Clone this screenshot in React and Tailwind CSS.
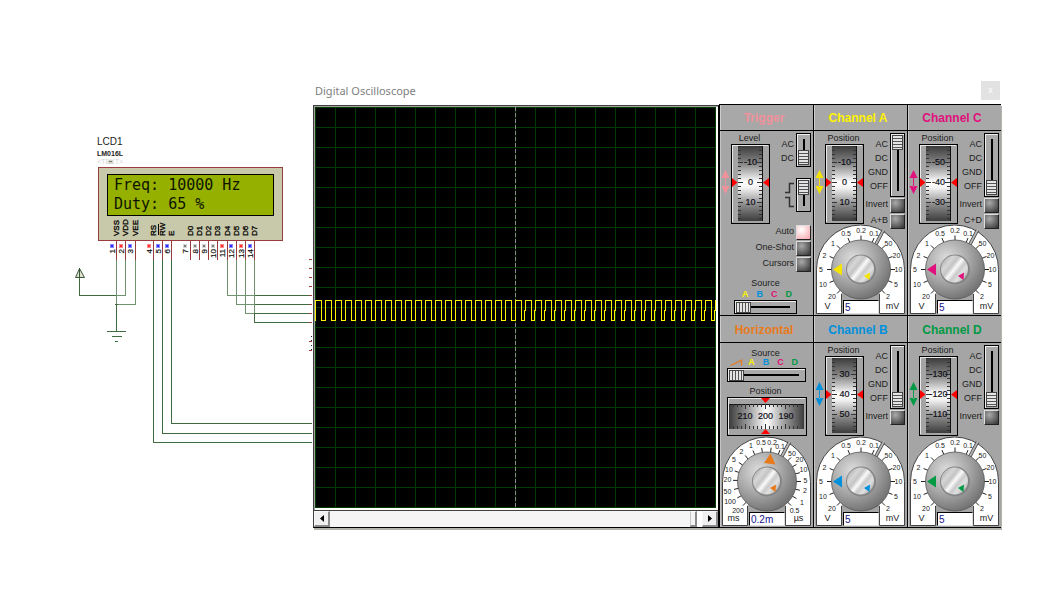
import React from "react";

const WIRE = "#3f6b3f";
const WIRE_SOFT = "#6f936f";
const PIN = "#9a3b40";

const PINS = [
  { n: "1", name: "VSS", x: 116, nx: 111, state: "low" },
  { n: "2", name: "VDD", x: 125, nx: 120, state: "high" },
  { n: "3", name: "VEE", x: 135, nx: 129, state: "low" },
  { n: "4", name: "RS", x: 153, nx: 148, state: "high" },
  { n: "5", name: "RW", x: 162, nx: 157, state: "low" },
  { n: "6", name: "E", x: 171, nx: 166, state: "low" },
  { n: "7", name: "D0", x: 190, nx: 184, state: "open" },
  { n: "8", name: "D1", x: 199, nx: 194, state: "open" },
  { n: "9", name: "D2", x: 208, nx: 203, state: "open" },
  { n: "10", name: "D3", x: 217, nx: 212, state: "open" },
  { n: "11", name: "D4", x: 227, nx: 221, state: "high" },
  { n: "12", name: "D5", x: 236, nx: 230, state: "low" },
  { n: "13", name: "D6", x: 245, nx: 240, state: "high" },
  { n: "14", name: "D7", x: 254, nx: 249, state: "low" },
];

const STATE_COLORS = {
  low: ["#8a8aff", "#2a2aff"],
  high: ["#ff8a8a", "#ff3030"],
  open: ["#d4d4d4", "#7c7c7c"],
};

function Schematic() {
  return (
    <svg
      className="h-[560px] w-[313px] shrink-0"
      viewBox="0 0 313 560"
      role="img"
      aria-label="LCD schematic"
      fontFamily="'Liberation Sans', Arial, sans-serif"
    >
      <text x="97" y="145" fontSize="10" fill="#222">LCD1</text>
      <text x="97" y="156" fontSize="7" fontWeight="700" fill="#222">LM016L</text>
      <text x="97" y="164" fontSize="7" fill="#d4d4d4">&lt;TEXT&gt;</text>
      <rect x="108" y="160" width="5" height="4" fill="#d8dac8" />
      <rect x="109" y="161" width="3" height="1" fill="#777" />

      <g shapeRendering="crispEdges">
        <rect x="98.5" y="167.5" width="184" height="73" fill="#c8c8aa" stroke={PIN} />
        <rect x="107.5" y="174.5" width="166" height="41" fill="#96b000" stroke="#000" />
      </g>
      <g fontFamily="'DejaVu Sans Mono', 'Liberation Mono', monospace" fontSize="15" fill="#0c1400">
        <text x="114" y="190">Freq: 10000 Hz</text>
        <text x="114" y="209">Duty: 65 %</text>
      </g>

      <g shapeRendering="crispEdges" fill="none" stroke={WIRE}>
        <path d="M79.5 268V295.5H116M116.5 304V331" />
        <path d="M115 304.5H118M107 331.5H126M112 336.5H122M115 341.5H118" />
        <path d="M153.5 260V442.5H312M162.5 260V433.5H312M171.5 260V423.5H312" />
        <path d="M254 295.5H312M254 304.5H312M254 313.5H312M254.5 313V322.5H312" />
      </g>
      <g shapeRendering="crispEdges" fill="none" stroke={WIRE_SOFT}>
        <path d="M116.5 260V304M125.5 260V295.5H116M135.5 260V304.5H118" />
        <path d="M227.5 260V295.5H254M236.5 260V304.5H254M245.5 260V313.5H254M254.5 260V313" />
      </g>
      <path d="M79.500 268.500L75.500 277.500H84.500ZM79.500 268V278" fill="#e4e0d0" stroke="#38563a" />

      <g shapeRendering="crispEdges" stroke={PIN}>
        {[259, 268, 277, 286, 295, 304, 313, 322, 341, 350].map((y) => (
          <path key={y} d={`M309 ${y + 0.5}H312`} />
        ))}
      </g>
      {[336, 340, 345, 349].map((y) => (
        <rect key={y} x="311" y={y} width="1" height="1" fill="#222" />
      ))}

      {PINS.map((p) => (
        <g key={p.n}>
          <path d={`M${p.x + 0.5} 241V260`} stroke={PIN} shapeRendering="crispEdges" />
          <rect x={p.nx - 1} y="244" width="4" height="4" fill={STATE_COLORS[p.state][0]} />
          <rect x={p.nx} y="245" width="2" height="2" fill={STATE_COLORS[p.state][1]} />
          <text transform={`translate(${p.x + 3} 236) rotate(-90)`} fontSize="8" fill="#000" stroke="#000" strokeWidth="0.3">
            {p.name}
          </text>
          <text transform={`translate(${p.nx + 4} 249) rotate(-90)`} textAnchor="end" fontSize="8" fill="#111" stroke="#111" strokeWidth="0.2">
            {p.n}
          </text>
        </g>
      ))}
      <path d="M158.500 224V235" stroke="#000" />
    </svg>
  );
}

const TRACE = (() => {
  let d = "M0.5 213.5V193.5";
  for (let i = 0; i < 200; i++) {
    const x = i * 10;
    d += `H${x + 6.5}V213.5`;
    d += i < 20 ? `H${x + 10.5}V193.5` : `H${x + 9.5}V203.5H${x + 10.5}V193.5`;
  }
  return d;
})();

function Screen() {
  return (
    <svg className="block h-[401px] w-full bg-black" role="img" aria-label="Trace display" shapeRendering="crispEdges">
      <defs>
        <pattern id="graticule" width="20" height="20" patternUnits="userSpaceOnUse">
          <path d="M0 0.5H20M0.5 0V20" stroke="#003c00" fill="none" />
        </pattern>
      </defs>
      <rect width="100%" height="401" fill="url(#graticule)" />
      <line x1="50%" x2="50%" y1="0" y2="401" stroke="#8c8c8c" strokeDasharray="4 2" />
      <path d={TRACE} fill="none" stroke="#fff200" />
    </svg>
  );
}

const SCROLL_BUTTON =
  "flex w-4 shrink-0 items-center justify-center border border-r-2 border-b-2 border-[#f8f8f8] border-r-[#8a8a8a] border-b-[#8a8a8a] bg-[#f0f0f0]";

function ScrollBar() {
  return (
    <div className="flex h-4 bg-white">
      <button type="button" aria-label="Scroll left" className={SCROLL_BUTTON}>
        <svg className="h-[7px] w-[4px]" viewBox="0 0 4 7"><path d="M4 0V7L0 3.500Z" /></svg>
      </button>
      <input
        type="range"
        aria-label="Time base scroll"
        defaultValue="100"
        className="h-4 min-w-0 flex-1 appearance-none bg-[#f5f5f5] [&::-webkit-slider-thumb]:h-4 [&::-webkit-slider-thumb]:w-[7px] [&::-webkit-slider-thumb]:appearance-none [&::-webkit-slider-thumb]:border [&::-webkit-slider-thumb]:border-r-2 [&::-webkit-slider-thumb]:border-b-2 [&::-webkit-slider-thumb]:border-t-[#fff] [&::-webkit-slider-thumb]:border-l-[#c8c8c8] [&::-webkit-slider-thumb]:border-r-[#8a8a8a] [&::-webkit-slider-thumb]:border-b-[#8a8a8a] [&::-webkit-slider-thumb]:bg-[#f4f4f4]"
      />
      <span className="w-[5px] shrink-0" />
      <button type="button" aria-label="Scroll right" className={SCROLL_BUTTON}>
        <svg className="h-[7px] w-[4px]" viewBox="0 0 4 7"><path d="M0 0V7L4 3.500Z" /></svg>
      </button>
    </div>
  );
}

const BEVEL = "border border-black shadow-[inset_1px_1px_0_#eee] bg-[#a9a9a9]";

function VSlider({ label, max, value, tall }) {
  return (
    <div className={`flex w-[15px] shrink-0 justify-center py-px ${BEVEL} ${tall ? "h-16" : "h-[34px]"}`}>
      <input
        type="range"
        aria-label={label}
        min="0"
        max={max}
        defaultValue={value}
        className="m-0 h-full w-[11px] appearance-none bg-[linear-gradient(#000,#000)] bg-[length:2px_calc(100%-8px)] bg-center bg-no-repeat [writing-mode:vertical-lr] [&::-webkit-slider-thumb]:h-[15px] [&::-webkit-slider-thumb]:w-[11px] [&::-webkit-slider-thumb]:appearance-none [&::-webkit-slider-thumb]:border [&::-webkit-slider-thumb]:border-[#444] [&::-webkit-slider-thumb]:bg-[repeating-linear-gradient(#e4e4e4_0_2px,#555_2px_3px)]"
      />
    </div>
  );
}

function HSlider({ label, max, className }) {
  return (
    <div className={`flex h-[14px] items-center px-px ${BEVEL} ${className}`}>
      <input
        type="range"
        aria-label={label}
        min="0"
        max={max}
        defaultValue="0"
        className="m-0 h-[11px] w-full appearance-none bg-[linear-gradient(#000,#000)] bg-[length:calc(100%-10px)_2px] bg-center bg-no-repeat [&::-webkit-slider-thumb]:h-[11px] [&::-webkit-slider-thumb]:w-[15px] [&::-webkit-slider-thumb]:appearance-none [&::-webkit-slider-thumb]:border [&::-webkit-slider-thumb]:border-[#444] [&::-webkit-slider-thumb]:bg-[repeating-linear-gradient(90deg,#e4e4e4_0_2px,#555_2px_3px)]"
      />
    </div>
  );
}

function PushButton({ label, on }) {
  return (
    <label className="flex h-4 shrink-0 items-center justify-end gap-[2px] pr-[2px] whitespace-nowrap">
      {label}
      <input
        type="checkbox"
        defaultChecked={on}
        className="m-0 h-[15px] w-[15px] shrink-0 appearance-none border border-t-[#ddd] border-l-[#ddd] border-r-[#222] border-b-[#222] bg-[radial-gradient(circle_at_35%_30%,#aaa,#3c3c3c_90%)] checked:bg-[radial-gradient(circle_at_35%_30%,#fff,#f7a8ae_95%)]"
      />
    </label>
  );
}

const TICKS = [2, 6, 10, 14, 18, 22, 26, 30, 34, 38, 42, 46, 50, 54, 58, 62, 66, 70, 74];

function VWheel({ values }) {
  return (
    <svg className="h-20 w-[39px]" viewBox="0 0 39 80" fontFamily="'Liberation Sans', Arial, sans-serif" fontSize="9">
      <defs>
        <linearGradient id="drumV" x1="0" x2="0" y1="0" y2="1">
          <stop offset="0" stopColor="#3c3c3c" />
          <stop offset="0.25" stopColor="#8c8c8c" />
          <stop offset="0.48" stopColor="#fff" />
          <stop offset="0.56" stopColor="#f2f2f2" />
          <stop offset="0.78" stopColor="#8c8c8c" />
          <stop offset="1" stopColor="#3c3c3c" />
        </linearGradient>
      </defs>
      <g shapeRendering="crispEdges">
        <rect x="0.5" y="0.5" width="38" height="79" fill="#a4a4a4" stroke="#000" />
        <path d="M1.500 78V1.500H37" fill="none" stroke="#e8e8e8" />
        <rect x="7" y="2" width="25" height="75" fill="url(#drumV)" />
        <path d="M31.500 2V77" stroke="#111" />
        {TICKS.map((y) => {
          const len = y % 20 === 18 ? 5 : 3;
          return <path key={y} d={`M7 ${y + 0.5}h${len}M31 ${y + 0.5}h-${len}`} stroke="#333" />;
        })}
      </g>
      {values.map((v, i) => (
        <text key={v} x="19.500" y={21 + i * 20} textAnchor="middle" fill="#101018" stroke="#101018" strokeWidth="0.2">{v}</text>
      ))}
      <path d="M1 34V43L6.500 38.500ZM38 34V43L32 38.500Z" fill="#f00" />
    </svg>
  );
}

function HWheel({ values }) {
  const ticks = Array.from({ length: 18 }, (_, i) => 4 + i * 4);
  return (
    <svg className="ml-[7px] h-[39px] w-20" viewBox="0 0 80 39" fontFamily="'Liberation Sans', Arial, sans-serif" fontSize="9">
      <defs>
        <linearGradient id="drumH">
          <stop offset="0" stopColor="#3c3c3c" />
          <stop offset="0.25" stopColor="#999" />
          <stop offset="0.5" stopColor="#fff" />
          <stop offset="0.75" stopColor="#999" />
          <stop offset="1" stopColor="#3c3c3c" />
        </linearGradient>
      </defs>
      <g shapeRendering="crispEdges">
        <rect x="0.5" y="0.5" width="79" height="38" fill="#a4a4a4" stroke="#000" />
        <path d="M1.500 37V1.500H78" fill="none" stroke="#e8e8e8" />
        <rect x="2" y="7" width="75" height="25" fill="url(#drumH)" />
        <path d="M2 7.500H77" stroke="#111" />
        {ticks.map((x) => {
          const len = x % 20 === 0 ? 5 : 3;
          return <path key={x} d={`M${x - 1.5} 7v${len}M${x - 1.5} 32v-${len}`} stroke="#333" />;
        })}
      </g>
      {values.map((v, i) => (
        <text key={v} x={18 + i * 20.5} y="22" textAnchor="middle" fill="#101018" stroke="#101018" strokeWidth="0.2">{v}</text>
      ))}
      <path d="M34 1H43L38.500 6ZM34 37H43L38.500 32Z" fill="#f00" />
    </svg>
  );
}

function MoveArrow({ color }) {
  return (
    <div className="w-[11px] shrink-0 pt-[39px] pl-px">
      <svg className="h-6 w-[9px]" viewBox="0 0 9 24">
        <path d="M4.500 0L8.500 8H0.500ZM4.500 24L8.500 16H0.500ZM4 7H5V17H4Z" fill={color} />
      </svg>
    </div>
  );
}

const VOLT_SCALE = [
  ["20", 225, 17, 72], ["10", 202.5, 8, 60], ["5", 180, 6, 45], ["2", 157.5, 9.5, 31],
  ["1", 135, 18, 19], ["0.5", 112.5, 31, 9.5], ["0.2", 90, 46, 6.5], ["0.1", 67.5, 59, 9.5],
  ["50", 45, 73.5, 19], ["20", 22.5, 81.5, 31], ["10", 0, 83.5, 45], ["5", -22.5, 81, 60], ["2", -45, 73, 72],
];

const TIME_SCALE = [
  ["200", 225, 17, 74.5], ["100", 209, 9, 65.5], ["50", 193.5, 6.5, 55.5], ["20", 178, 6.5, 43.5],
  ["10", 162, 8, 33.5], ["5", 146, 13, 23], ["2", 130, 20.5, 15.5], ["1", 114.5, 30, 9.5],
  ["0.5", 99, 40, 6], ["0.2", 83, 51, 6], ["0.1", 67.5, 59, 10.5], ["50", 45, 71, 17.5],
  ["20", 30, 78.5, 23.5], ["10", 15, 82.5, 33.5], ["5", 0, 84.5, 44.5], ["2", -15, 84, 54.5],
  ["1", -30, 81, 66], ["0.5", -45, 73.5, 74.5],
];

function Dial({ scale, color, pointer, units, value, label }) {
  return (
    <div className="ml-px grid h-[90px] w-[91px]">
      <svg
        className="[grid-area:1/1] h-[90px] w-[91px]"
        viewBox="0 0 91 90"
        fontFamily="'Liberation Sans', Arial, sans-serif"
        fontSize="7"
        fill="#222"
        textAnchor="middle"
      >
        <defs>
          <radialGradient id="knobOuter" cx="0.36" cy="0.32" r="0.75">
            <stop offset="0" stopColor="#dedede" />
            <stop offset="0.5" stopColor="#a8a8a8" />
            <stop offset="1" stopColor="#6c6c6c" />
          </radialGradient>
          <linearGradient id="knobInner" x1="0" y1="0.1" x2="1" y2="0.9">
            <stop offset="0" stopColor="#a4a4a4" />
            <stop offset="0.25" stopColor="#d6d6d6" />
            <stop offset="0.38" stopColor="#c4c4c4" />
            <stop offset="0.5" stopColor="#fafafa" />
            <stop offset="0.62" stopColor="#cacaca" />
            <stop offset="0.75" stopColor="#e0e0e0" />
            <stop offset="1" stopColor="#a0a0a0" />
          </linearGradient>
        </defs>
        <path d="M1.500 89.500V45.500A44 44.500 0 0 1 89.500 45.500V89.500H64.500V70H26.500V89.500Z" fill="#fff" stroke="#444" />
        <path d="M60 22L68.500 6" stroke="#444" strokeWidth="3.500" />
        <path d="M60 22L69 5" stroke="#b4b4b4" strokeWidth="1.800" />
        <path d="M27 68H64V89H27Z" fill="#a4a4a4" />
        {scale.map(([text, angle, x, y]) => {
          const a = (angle * Math.PI) / 180;
          const c = Math.cos(a);
          const s = -Math.sin(a);
          return (
            <g key={angle}>
              <path d={`M${46 + c * 29} ${45.5 + s * 29}L${46 + c * 34} ${45.5 + s * 34}`} stroke="#222" />
              <text x={x} y={y + 2.5}>{text}</text>
            </g>
          );
        })}
        <circle cx="46" cy="45.500" r="29.500" fill="url(#knobOuter)" stroke="#555" strokeWidth="0.8" />
        <circle cx="46" cy="45.500" r="15" fill="#858585" />
        <circle cx="45.500" cy="45" r="13.500" fill="url(#knobInner)" />
        <path d={pointer} fill={color} />
        <path d="M49 52L55 48.500L54.500 56Z" fill={color} />
        <text x="12.500" y="85" fontSize="9">{units[0]}</text>
        <text x="77.500" y="85" fontSize="9">{units[1]}</text>
      </svg>
      <input
        type="text"
        aria-label={label}
        defaultValue={value}
        className="[grid-area:1/1] ml-7 h-[14px] w-9 self-end border border-r-[#ddd] border-b-[#ddd] border-t-black border-l-black bg-white px-px text-[10px] leading-3 text-[#14148c]"
      />
    </div>
  );
}

const POINT_LEFT = "M18 45.500L27 39.500V51.500Z";
const POINT_UP = "M49.500 17.500L43 27L54.500 28.500Z";

function Panel({ title, className, lower, children }) {
  return (
    <section className="border-b border-l border-black bg-[#a5a5a5]">
      <h2
        className={`flex items-center justify-center border-b border-black bg-[#a8a8a8] pt-px pr-[5px] text-[12px] leading-none font-bold shadow-[inset_1px_0_0_#ccc] ${lower ? "h-[27px]" : "h-[26px]"} ${className}`}
      >
        {title}
      </h2>
      <div className="h-[184px] shadow-[inset_1px_0_0_#c4c4c4]">{children}</div>
    </section>
  );
}

function Channel({ title, className, color, values, coupling, sum, lower }) {
  return (
    <Panel title={title} className={className} lower={lower}>
      <div className="flex h-[93px]">
        <MoveArrow color={color} />
        <div className="flex w-[39px] shrink-0 flex-col items-center">
          <span className="h-[13px] pr-[2px] leading-[14px]">Position</span>
          <VWheel values={values} />
        </div>
        <div className="flex flex-1 flex-col pt-[2px]">
          <div className="flex h-16 shrink-0 justify-end gap-[2px] pr-[2px]">
            <ul className="pt-1 text-right leading-[14px]">
              <li>AC</li>
              <li>DC</li>
              <li>GND</li>
              <li>OFF</li>
            </ul>
            <VSlider label={`${title} coupling`} max="3" value={coupling} tall />
          </div>
          <PushButton label="Invert" />
          {sum && <PushButton label={sum} />}
        </div>
      </div>
      <Dial scale={VOLT_SCALE} color={color} pointer={POINT_LEFT} units={["V", "mV"]} value="5" label={`${title} volts per division`} />
    </Panel>
  );
}

function SourceLetters() {
  return (
    <>
      <span className="text-[#fff200]">A</span>
      <span className="text-[#0090dc]">B</span>
      <span className="text-[#e0107c]">C</span>
      <span className="text-[#009a44]">D</span>
    </>
  );
}

function TriggerPanel() {
  return (
    <Panel title="Trigger" className="text-[#f0919b]">
      <div className="flex h-[93px]">
        <MoveArrow color="#f0919b" />
        <div className="flex w-[39px] shrink-0 flex-col items-center">
          <span className="h-[13px] pr-[2px] leading-[14px]">Level</span>
          <VWheel values={["-10", "0", "10"]} />
        </div>
        <div className="flex flex-1 flex-col gap-[11px] pt-[2px] pr-[2px]">
          <div className="flex justify-end gap-[2px]">
            <ul className="pt-1 text-right leading-[14px]">
              <li>AC</li>
              <li>DC</li>
            </ul>
            <VSlider label="Trigger coupling" max="1" value="1" />
          </div>
          <div className="flex items-center justify-end gap-[2px]">
            <svg className="h-7 w-[9px]" viewBox="0 0 9 28" fill="none" stroke="#333" strokeWidth="1.500">
              <path d="M0 11.500H4.500V2.500H9M0 16.500H4.500V25.500H9" />
            </svg>
            <VSlider label="Trigger edge" max="1" value="0" />
          </div>
        </div>
      </div>
      <PushButton label="Auto" on />
      <PushButton label="One-Shot" />
      <PushButton label="Cursors" />
      <p className="pt-[5px] pr-[2px] text-center leading-3">Source</p>
      <div className="ml-[18px] grid w-[58px] grid-cols-4 text-center leading-[11px] font-bold">
        <SourceLetters />
      </div>
      <HSlider label="Trigger source" max="3" className="ml-[14px] w-[63px]" />
    </Panel>
  );
}

function HorizontalPanel() {
  return (
    <Panel title="Horizontal" className="text-[#e87a1c]" lower>
      <div className="h-[93px]">
        <p className="pt-[5px] pr-[2px] text-center leading-[10px]">Source</p>
        <div className="ml-[10px] grid h-[10px] w-[72px] grid-cols-5 text-center leading-[9px] font-bold">
          <svg className="h-[9px] w-[14px]" viewBox="0 0 14 9" fill="none" stroke="#e87a1c" strokeWidth="1.200">
            <path d="M1 7.500L11.500 2V7.500" />
          </svg>
          <SourceLetters />
        </div>
        <HSlider label="Horizontal source" max="4" className="ml-[7px] w-[79px]" />
        <p className="pt-[3px] pr-[2px] text-center leading-3">Position</p>
        <HWheel values={["210", "200", "190"]} />
      </div>
      <Dial scale={TIME_SCALE} color="#e87a1c" pointer={POINT_UP} units={["ms", "µs"]} value="0.2m" label="Time per division" />
    </Panel>
  );
}

export default function App() {
  return (
    <main className="flex min-h-screen items-start bg-white font-['Liberation_Sans',Arial,sans-serif] text-[9px] text-[#1c1c1c]">
      <Schematic />
      <section className="mt-[76px] mr-[41px] min-w-0 flex-1">
        <header className="flex h-7 items-center justify-between pr-px pl-[2px]">
          <h1 className="pt-[2px] font-['Noto_Sans','Open_Sans',sans-serif] text-[11px] text-[#808080]">Digital Oscilloscope</h1>
          <button type="button" aria-label="Close" className="h-[19px] w-[19px] bg-[#e2e2e2] text-[9px] leading-none text-white">
            x
          </button>
        </header>
        <div className="flex shadow-[1px_2px_0_#b4b4ac]">
          <div className="mt-px flex min-w-0 flex-1 flex-col border border-t-[#404040] border-r-black border-b-black border-l-[#404040] bg-white">
            <div className="flex-1 border-b border-[#404040] pr-[2px] pb-[2px] shadow-[inset_1px_1px_0_#a0a0a0]">
              <div className="pt-px pl-px">
                <Screen />
              </div>
            </div>
            <ScrollBar />
          </div>
          <div className="grid shrink-0 grid-cols-[94px_94px_94px] border-t border-black shadow-[inset_-1px_0_0_#000]">
            <TriggerPanel />
            <Channel title="Channel A" className="text-[#fff200]" color="#f5e400" values={["-10", "0", "10"]} coupling="0" sum="A+B" />
            <Channel title="Channel C" className="text-[#e0107c]" color="#e0107c" values={["-50", "-40", "-30"]} coupling="3" sum="C+D" />
            <HorizontalPanel />
            <Channel title="Channel B" className="text-[#0090dc]" color="#0090dc" values={["30", "40", "50"]} coupling="3" lower />
            <Channel title="Channel D" className="text-[#009a44]" color="#009a44" values={["-130", "-120", "-110"]} coupling="3" lower />
          </div>
        </div>
      </section>
    </main>
  );
}
